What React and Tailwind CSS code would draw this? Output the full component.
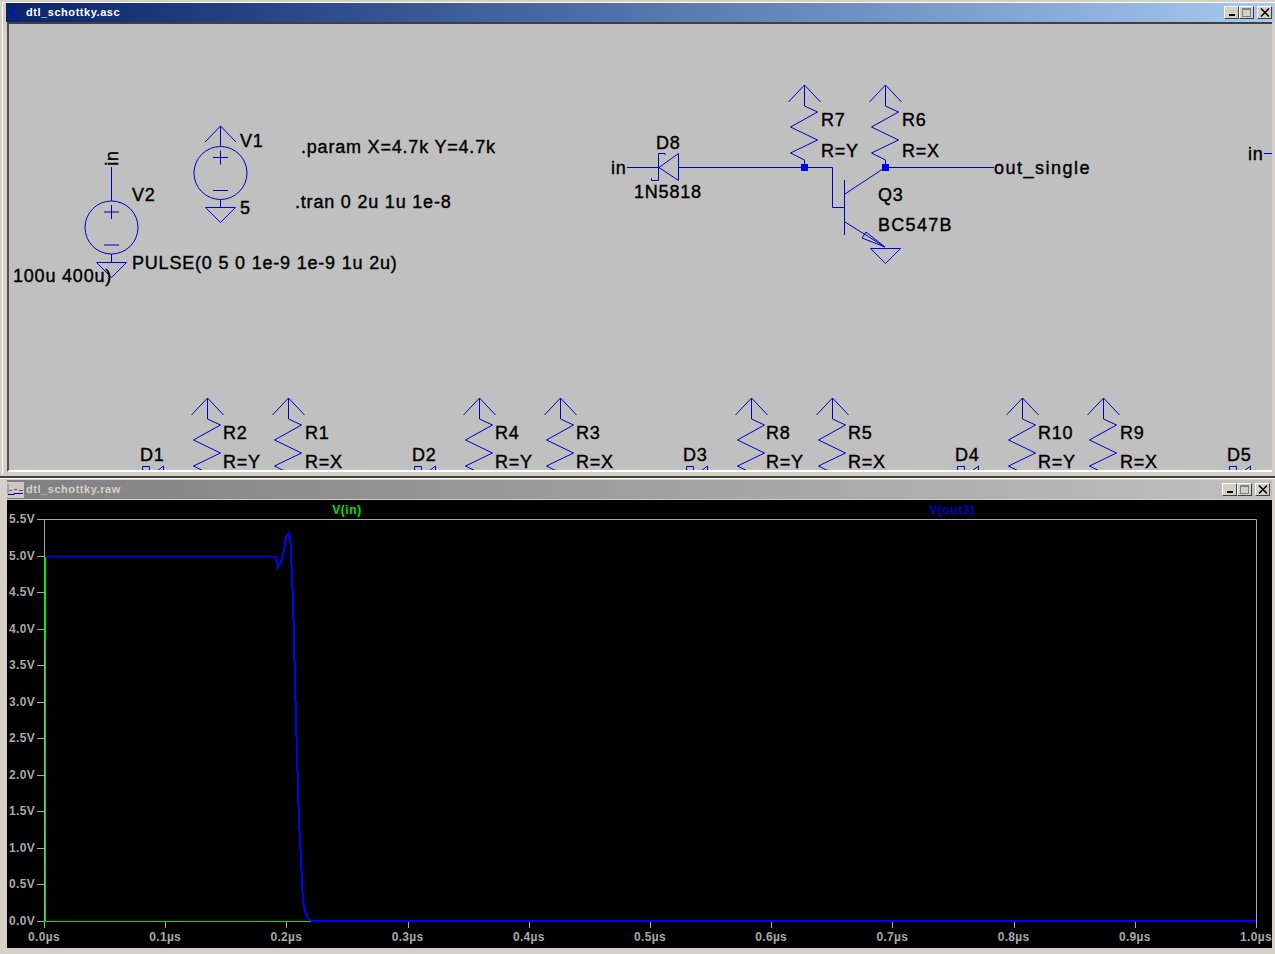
const font = "[font-family:'Liberation_Sans',Arial,sans-serif]";

// page coordinates of the two panes, labels below are written in page coordinates
const CANVAS_X = 9;
const CANVAS_Y = 24;
const PLOT_X = 7;
const PLOT_Y = 500;

const schematicLabels = [
  ["V1", 240, 140],
  ["V2", 132, 194],
  ["5", 240, 207],
  ["100u 400u)", 13, 275],
  ["PULSE(0 5 0 1e-9 1e-9 1u 2u)", 132, 262],
  [".param X=4.7k Y=4.7k", 301, 146],
  [".tran 0 2u 1u 1e-8", 295, 201],
  ["in", 611, 167],
  ["D8", 656, 142],
  ["1N5818", 634, 191],
  ["R7", 821, 119],
  ["R=Y", 821, 150],
  ["R6", 902, 119],
  ["R=X", 902, 150],
  ["out_single", 994, 167, "tracking-[1.5px]"],
  ["Q3", 878, 194],
  ["BC547B", 878, 224, "tracking-[1.3px]"],
  ["in", 1248, 153],
  ["R2", 223, 432],
  ["R=Y", 223, 461],
  ["R1", 305, 432],
  ["R=X", 305, 461],
  ["R4", 495, 432],
  ["R=Y", 495, 461],
  ["R3", 576, 432],
  ["R=X", 576, 461],
  ["R8", 766, 432],
  ["R=Y", 766, 461],
  ["R5", 848, 432],
  ["R=X", 848, 461],
  ["R10", 1038, 432],
  ["R=Y", 1038, 461],
  ["R9", 1120, 432],
  ["R=X", 1120, 461],
  ["D1", 140, 454],
  ["D2", 412, 454],
  ["D3", 683, 454],
  ["D4", 955, 454],
  ["D5", 1227, 454],
];

const resistors = [
  [804, 85], [885, 85],
  [207, 398], [288, 398], [479, 398], [560, 398],
  [751, 398], [832, 398], [1022, 398], [1103, 398],
];
const clippedDiodes = [142, 414, 686, 957, 1229];

const yTicks = ["0.0V", "0.5V", "1.0V", "1.5V", "2.0V", "2.5V", "3.0V", "3.5V", "4.0V", "4.5V", "5.0V", "5.5V"];
const xTicks = ["0.0µs", "0.1µs", "0.2µs", "0.3µs", "0.4µs", "0.5µs", "0.6µs", "0.7µs", "0.8µs", "0.9µs", "1.0µs"];
const yPos = (i) => 921 - i * 36.55;
const xPos = (i) => 44 + i * 121.2;

function Resistor({ x, y }) {
  const pts = [
    [x, y], [x, y + 21], [x + 13, y + 27], [x - 14, y + 42], [x + 13, y + 55],
    [x - 14, y + 68], [x, y + 75], [x, y + 82],
  ];
  return (
    <g>
      <path d={`M${x - 16} ${y + 17}L${x} ${y}L${x + 16} ${y + 17}`} />
      <polyline points={pts.map((p) => p.join(",")).join(" ")} />
    </g>
  );
}

function Source({ x, y }) {
  return (
    <g>
      <circle cx={x} cy={y} r="26.5" />
      <path d={`M${x - 7.5} ${y - 15.5}H${x + 7.5}M${x} ${y - 22.5}V${y - 8.5}M${x - 7.5} ${y + 17.5}H${x + 7.5}`} />
    </g>
  );
}

function Ground({ x, y }) {
  return <polygon points={`${x - 15},${y} ${x + 15},${y} ${x},${y + 15}`} className="stroke-[#0000ff]" />;
}

function Schematic() {
  return (
    <svg
      viewBox={`${CANVAS_X} ${CANVAS_Y} 1263 446`}
      className="absolute inset-0 h-full w-full fill-none stroke-[#0000c0]"
      strokeWidth="1"
    >
      {/* V2 */}
      <path d="M111.5 167V201M111.5 254V262" />
      <Source x={111.5} y={227.5} />
      <Ground x={111.5} y={262.5} />

      {/* V1 */}
      <path d="M205 142L220.5 126L236 142M220.5 126V146M220.5 200V207" />
      <Source x={220.5} y={173} />
      <Ground x={220.5} y={207.5} />

      {/* D8 and wires */}
      <path d="M627 167.5H659M679 167.5H832.5V207.5H845" />
      <path d="M665 155V153.5H658.5V180.5H651.5V178" />
      <polygon points="659,167.5 678.5,153.5 678.5,180.5" />

      {/* Q3 */}
      <path d="M844.5 180V235M845 194L885 167.5M845 222L885 247" />
      <polygon points="862,238 866,232 885,247" />
      <Ground x={885.5} y={248.5} />
      <path d="M885 167.5H994M1264 153.5H1272" />

      {resistors.map(([x, y]) => (
        <Resistor key={`${x}-${y}`} x={x + 0.5} y={y} />
      ))}

      {clippedDiodes.map((x) => (
        <path key={x} d={`M${x + 0.5} 472V466.5H${x + 7.5}V472M${x + 15} 471L${x + 21.5} 466V472`} />
      ))}

      <rect x="801" y="164" width="7" height="7" className="fill-[#0000ff] stroke-none" />
      <rect x="882" y="164" width="7" height="7" className="fill-[#0000ff] stroke-none" />
    </svg>
  );
}

function Trace() {
  return (
    <svg viewBox={`${PLOT_X} ${PLOT_Y} 1265 448`} className="absolute inset-0 h-full w-full fill-none">
      <path d="M44 519.5H1256.5V921.5H44.5V519.5" stroke="#a8a8a8" />
      {yTicks.map((_, i) => (
        <path key={i} d={`M37 ${Math.round(yPos(i)) + 0.5}H44`} stroke="#a8a8a8" />
      ))}
      {xTicks.map((_, i) => (
        <path key={i} d={`M${Math.round(xPos(i)) + 0.5} 921V928`} stroke="#a8a8a8" />
      ))}
      {/* V(in) */}
      <path d="M45.5 921V556M44 921.5H1256" stroke="#00e000" />
      <path d="M45 640V556" stroke="#00f000" strokeWidth="2" />
      {/* V(out3) */}
      <path d="M45 556.5H276" stroke="#0000ff" strokeWidth="1.5" />
      <path
        d="M276 556.5L278 567L281 562L284 551L286 537L289 533L290.5 545L292 575L293 600L294 640L296 720L299 820L300 840L301 860L302 880L303 900L305 912L308 919L312 921H1256"
        stroke="#0000ff"
        strokeWidth="2"
        shapeRendering="crispEdges"
      />
    </svg>
  );
}

function CaptionButton({ children }) {
  return (
    <div className="flex h-[13px] w-[15px] items-center justify-center border border-t-white border-l-white border-r-[#404040] border-b-[#404040] bg-[#d4d0c8]">
      {children}
    </div>
  );
}

function TitleBar({ title, inactive, icon }) {
  return (
    <div
      className={`flex h-[19px] shrink-0 items-center pr-[2px] ${
        inactive
          ? "bg-gradient-to-r from-[#808080] to-[#c0c0c0] text-[#d4d0c8]"
          : "bg-gradient-to-r from-[#0a246a] to-[#a6caf0] text-white"
      }`}
    >
      <div className={`flex w-[19px] shrink-0 items-center ${inactive ? "" : "ml-[1px]"}`}>{icon}</div>
      <span className="text-[11px] font-bold tracking-[0.55px]">{title}</span>
      <div className="ml-auto flex items-center pb-[1px]">
        <CaptionButton>
          <svg width="10" height="9" viewBox="0 0 10 9" className="fill-black">
            <rect x="2" y="6" width="6" height="2" />
          </svg>
        </CaptionButton>
        <CaptionButton>
          <svg width="11" height="9" viewBox="0 0 11 9" className="fill-none stroke-[#808080]">
            <rect x="1.5" y="1.5" width="8" height="7" />
            <path d="M1 1H10" strokeWidth="2" />
          </svg>
        </CaptionButton>
        <div className="w-[3px]" />
        <CaptionButton>
          <svg width="10" height="9" viewBox="0 0 10 9" className="fill-none stroke-black" strokeWidth="1.5">
            <path d="M1 0.5L9 8.5M9 0.5L1 8.5" />
          </svg>
        </CaptionButton>
      </div>
    </div>
  );
}

function SchematicIcon() {
  return (
    <svg width="12" height="17" viewBox="0 0 12 17" className="ml-[2px] fill-none stroke-[#0000ff]">
      <path d="M9 1L6 4L4 7L1 9L5 10L7 13L10 15M4 5L1 7M5 11L3 13" />
    </svg>
  );
}

function PlotIcon() {
  return (
    <svg width="17" height="16" viewBox="0 0 17 16">
      <rect width="17" height="16" fill="#c8c8c8" />
      <path d="M1 2V13" stroke="#808080" />
      <path d="M2 8.5H5M7 7.5H10M12 8.5H16" stroke="#e02020" />
      <path d="M1 12.5H6L8 11.5H16" stroke="#0000c0" strokeWidth="1.2" />
    </svg>
  );
}

export default function App() {
  return (
    <div className={`flex h-[954px] w-[1275px] flex-col overflow-hidden bg-[#d4d0c8] ${font}`}>
      {/* schematic window */}
      <div className="h-[476px] shrink-0 pt-[2px] pl-[2px]">
        <div className="flex h-[472px] w-[1273px] flex-col border-t border-l border-t-white border-l-white pl-[3px] pr-[1px]">
          <TitleBar title="dtl_schottky.asc" icon={<SchematicIcon />} />
          <div className="ml-[1px] w-[1265px] border-t-2 border-b-2 border-l-2 border-t-[#404040] border-b-white border-l-[#505050]">
            <div className="relative h-[446px] w-[1263px] overflow-hidden bg-[#c0c0c0] text-[18px] tracking-[0.8px] text-black [-webkit-text-stroke:0.4px_#000]">
              <Schematic />
              <span
                className="absolute -rotate-90 leading-none"
                style={{ left: 111 - CANVAS_X - 7, top: 158 - CANVAS_Y - 9 }}
              >
                in
              </span>
              {schematicLabels.map(([text, x, y, extra], i) => (
                <span
                  key={i}
                  className={`absolute whitespace-nowrap leading-[14px] ${extra || ""}`}
                  style={{ left: x - CANVAS_X, top: y - CANVAS_Y - 6 }}
                >
                  {text}
                </span>
              ))}
            </div>
          </div>
        </div>
      </div>

      {/* waveform window */}
      <div className="h-[2px] shrink-0 bg-[#404040]" />
      <div className="flex min-h-0 flex-1 flex-col border-t border-t-white pt-[1px] pl-[7px] pr-[3px]">
        <TitleBar title="dtl_schottky.raw" inactive icon={<PlotIcon />} />
        <div className="relative mt-[1px] h-[448px] w-[1265px] overflow-hidden bg-black text-[12px] font-bold tracking-[0.3px] text-[#a8a8a8]">
          <Trace />
          <span className="absolute left-[310px] top-[1px] w-[60px] text-center tracking-[0.6px] text-[#00e000]">V(in)</span>
          <span className="absolute left-[905px] top-[1px] w-[80px] text-center tracking-[0.7px] text-[#0000c8]">V(out3)</span>
          {yTicks.map((t, i) => (
            <span
              key={t}
              className="absolute w-[28px] text-right leading-[14px]"
              style={{ left: 0, top: yPos(i) - PLOT_Y - 7 }}
            >
              {t}
            </span>
          ))}
          {xTicks.map((t, i) => (
            <span
              key={t}
              className="absolute w-[50px] text-center leading-[14px]"
              style={{ left: xPos(i) - PLOT_X - 25, top: 937 - PLOT_Y - 7 }}
            >
              {t}
            </span>
          ))}
        </div>
      </div>
    </div>
  );
}
